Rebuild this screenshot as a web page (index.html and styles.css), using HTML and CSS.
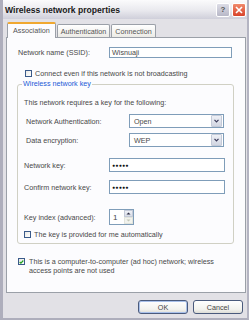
FILE: index.html
```html
<html>
<head>
    <meta name="viewport" content="width=device-width, initial-scale=1">
    <link rel="stylesheet" href="styles.css">
</head>
<body>
    <div class="window">
        <div class="titlebar">
            <span class="title">Wireless network properties</span>
            <div class="title-buttons">
                <span class="tbtn help">?</span>
                <span class="tbtn close">
                    <svg width="8" height="8" viewBox="0 0 8 8"><path d="M1 1L7 7M7 1L1 7" stroke="#fff" stroke-width="1.6"/></svg>
                </span>
            </div>
        </div>
        <div class="client">
            <div class="tabs">
                <div class="tab active">Association</div>
                <div class="tab">Authentication</div>
                <div class="tab">Connection</div>
            </div>
            <div class="panel">
                <div class="row ssid-row">
                    <span class="label ssid-label">Network name (SSID):</span>
                    <div class="field ssid">Wisnuaji</div>
                </div>
                <div class="check broadcast">
                    <span class="box"></span>
                    <span>Connect even if this network is not broadcasting</span>
                </div>
                <div class="group">
                    <span class="legend">Wireless network key</span>
                    <div class="intro">This network requires a key for the following:</div>
                    <div class="row auth-row">
                        <span class="label sel-label">Network Authentication:</span>
                        <div class="select"><span>Open</span><span class="arrow"><svg width="5" height="4" viewBox="0 0 5 4"><path d="M0.5 0.8L2.5 2.8L4.5 0.8" fill="none" stroke="#3a3a5a" stroke-width="1.2"/></svg></span></div>
                    </div>
                    <div class="row enc-row">
                        <span class="label sel-label">Data encryption:</span>
                        <div class="select"><span>WEP</span><span class="arrow"><svg width="5" height="4" viewBox="0 0 5 4"><path d="M0.5 0.8L2.5 2.8L4.5 0.8" fill="none" stroke="#3a3a5a" stroke-width="1.2"/></svg></span></div>
                    </div>
                    <div class="row key-row">
                        <span class="label key-label">Network key:</span>
                        <div class="field key">&#9679;&#9679;&#9679;&#9679;&#9679;</div>
                    </div>
                    <div class="row confirm-row">
                        <span class="label key-label">Confirm network key:</span>
                        <div class="field key">&#9679;&#9679;&#9679;&#9679;&#9679;</div>
                    </div>
                    <div class="row index-row">
                        <span class="label key-label">Key index (advanced):</span>
                        <div class="spinner">
                            <span class="spin-value">1</span>
                            <span class="spin-arrows">
                                <span class="spin up"><svg width="5" height="3" viewBox="0 0 5 3"><path d="M0.5 2.5L2.5 0.5L4.5 2.5Z" fill="#2a2a40"/></svg></span>
                                <span class="spin down"><svg width="5" height="3" viewBox="0 0 5 3"><path d="M0.5 0.5L2.5 2.5L4.5 0.5Z" fill="#c4c8b8"/></svg></span>
                            </span>
                        </div>
                    </div>
                    <div class="check auto">
                        <span class="box"></span>
                        <span>The key is provided for me automatically</span>
                    </div>
                </div>
                <div class="check adhoc">
                    <span class="box checked"><svg width="6" height="6" viewBox="0 0 6 6"><path d="M0.8 3L2.3 4.5L5.2 1.2" fill="none" stroke="#21a121" stroke-width="1.4"/></svg></span>
                    <span class="adhoc-text">This is a computer-to-computer (ad hoc) network; wireless access points are not used</span>
                </div>
            </div>
            <div class="buttons">
                <div class="button default">OK</div>
                <div class="button">Cancel</div>
            </div>
        </div>
    </div>
</body>
</html>
```

FILE: styles.css
```css
body {
    margin: 0;
    background-color: #e2e1e6;
    font-family: 'Liberation Sans', Arial, sans-serif;
    font-size: 7.2px;
    color: #484848;
}

.window {
    width: 249px;
    height: 320px;
    box-sizing: border-box;
    border-left: 3px solid #aeaebc;
    border-right: 2px solid #b4b4c2;
    border-bottom: 2px solid #aeaebc;
    background-color: #e2e1e6;
    overflow: hidden;
}

.titlebar {
    height: 19px;
    margin-left: -3px;
    margin-right: -2px;
    padding-left: 5px;
    display: flex;
    align-items: center;
    background: linear-gradient(#fbfbfc, #e9e9ee 55%, #cfcfda);
}

.title {
    font-size: 8.6px;
    font-weight: bold;
    color: #1a1a1a;
    flex: 1;
}

.title-buttons {
    display: flex;
    gap: 2px;
    padding-right: 3px;
}

.tbtn {
    width: 12px;
    height: 12px;
    border: 1px solid #fff;
    border-radius: 2px;
    display: flex;
    align-items: center;
    justify-content: center;
}

.help {
    background: linear-gradient(#dcdce6, #b8b8c8);
    color: #555;
    font-size: 8px;
    font-weight: bold;
}

.close {
    background: linear-gradient(#f08a6c, #d8432a);
}

.client {
    padding: 3px 1px 0 3px;
}

.tabs {
    display: flex;
    align-items: flex-end;
    height: 15px;
    padding-left: 1px;
}

.tab {
    height: 12px;
    padding: 0 3px;
    margin-right: 1px;
    border: 1px solid #9ba0a8;
    border-bottom: none;
    border-radius: 2px 2px 0 0;
    background: linear-gradient(#ffffff, #ecebe6);
    display: flex;
    align-items: center;
    color: #555;
}

.tab.active {
    margin-bottom: -1px;
    padding: 2px 5px 0 5px;
    position: relative;
    z-index: 1;
    background: #fcfcfe;
    border-top: 2px solid #f0a830;
    align-items: flex-start;
    box-sizing: border-box;
    height: 16px;
}

.panel {
    height: 256px;
    box-sizing: border-box;
    border: 1px solid #9ba0a8;
    background-color: #fcfcfe;
    padding: 0 11px 0 10px;
}

.row {
    display: flex;
    align-items: center;
}

.ssid-row {
    margin-top: 8px;
    height: 12px;
}

.ssid-label {
    width: 91px;
    padding-left: 1px;
}

.field {
    height: 12px;
    box-sizing: border-box;
    border: 1px solid #7f9db9;
    background: #fff;
    padding-left: 2px;
    display: flex;
    align-items: center;
}

.ssid {
    width: 123px;
    height: 11px;
}

.check {
    display: flex;
    align-items: center;
    gap: 3px;
}

.box {
    width: 7px;
    height: 7px;
    box-sizing: border-box;
    border: 1px solid #3a5a8a;
    background: linear-gradient(135deg, #e8e8e4, #ffffff);
    display: flex;
    align-items: center;
    justify-content: center;
    flex-shrink: 0;
}

.broadcast {
    margin-top: 11px;
    padding-left: 8px;
    height: 8px;
}

.group {
    position: relative;
    margin-top: 7px;
    height: 160px;
    box-sizing: border-box;
    border: 1px solid #d0d0c4;
    border-radius: 3px;
    padding-left: 6px;
}

.legend {
    position: absolute;
    top: -5px;
    left: 4px;
    padding: 0 1px;
    background: #fcfcfe;
    color: #1a5ad6;
    line-height: 8px;
}

.intro {
    margin-top: 14px;
    line-height: 8px;
}

.auth-row {
    margin-top: 7px;
    height: 14px;
}

.enc-row {
    margin-top: 5px;
    height: 14px;
}

.sel-label {
    width: 103px;
    padding-left: 2px;
}

.select {
    width: 95px;
    height: 14px;
    box-sizing: border-box;
    border: 1px solid #7f9db9;
    background: #fff;
    display: flex;
    align-items: center;
    justify-content: space-between;
    padding-left: 4px;
}

.arrow {
    width: 9px;
    height: 10px;
    margin-right: 1px;
    border: 1px solid #c4cad8;
    border-radius: 1px;
    background: linear-gradient(#eef0f6, #d2d6e2);
    display: flex;
    align-items: center;
    justify-content: center;
}

.key-row {
    margin-top: 11px;
    height: 14px;
}

.confirm-row {
    margin-top: 8px;
    height: 14px;
}

.key-label {
    width: 85px;
}

.key {
    width: 116px;
    height: 14px;
    font-size: 5px;
    letter-spacing: 0.3px;
    color: #111;
}

.index-row {
    margin-top: 15px;
    height: 16px;
}

.spinner {
    width: 25px;
    height: 16px;
    box-sizing: border-box;
    border: 1px solid #7f9db9;
    background: #fff;
    display: flex;
}

.spin-value {
    flex: 1;
    padding-left: 3px;
    display: flex;
    align-items: center;
    font-size: 8px;
}

.spin-arrows {
    width: 9px;
    display: flex;
    flex-direction: column;
}

.spin {
    flex: 1;
    border: 1px solid #c4cad8;
    background: linear-gradient(#eef0f6, #d8dce6);
    display: flex;
    align-items: center;
    justify-content: center;
}

.spin.down {
    background: #f2f3ee;
    border-color: #e2e4dc;
}

.auto {
    margin-top: 5px;
    height: 8px;
}

.adhoc {
    margin-top: 13px;
    align-items: flex-start;
    padding-left: 1px;
    gap: 4px;
}

.box.checked {
    margin-top: 1px;
}

.adhoc-text {
    width: 186px;
    line-height: 9px;
}

.buttons {
    display: flex;
    justify-content: flex-end;
    gap: 5px;
    margin-top: 7px;
    padding-right: 3px;
}

.button {
    width: 50px;
    height: 14px;
    box-sizing: border-box;
    border: 1px solid #4a5a7c;
    border-radius: 3px;
    background: linear-gradient(#ffffff, #f2f2ee 70%, #dcdcd6);
    display: flex;
    align-items: center;
    justify-content: center;
    color: #444;
}

.button.default {
    box-shadow: inset 0 0 0 1px #a8c0ea;
}
```
